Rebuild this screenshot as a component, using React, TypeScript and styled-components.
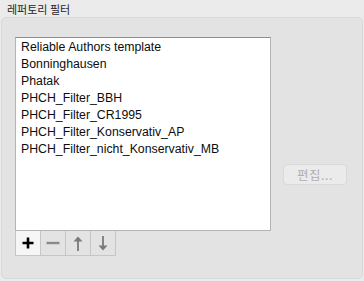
import React from "react";
import styled, { createGlobalStyle } from "styled-components";

const Global = createGlobalStyle`
  html, body { margin: 0; padding: 0; background: #ebebeb; }
  body { width: 364px; height: 281px; overflow: hidden; font-family: "Liberation Sans", Arial, "Noto Sans CJK KR", sans-serif; }
`;

const Page = styled.div`
  width: 364px;
  height: 281px;
  box-sizing: border-box;
  padding: 3px 1px 2px 1px;
  display: flex;
  flex-direction: column;
`;

const Title = styled.div`
  font-family: "Noto Sans CJK KR", "Liberation Sans", sans-serif;
  font-size: 11px;
  line-height: 13px;
  color: #262626;
  padding-left: 6px;
  height: 14px;
`;

const Group = styled.div`
  flex: 1;
  box-sizing: border-box;
  background: #e3e3e3;
  border: 1px solid #d8d8d8;
  border-radius: 5px;
  padding: 19px 14px 0 13px;
  display: flex;
  gap: 12px;
`;

const ListColumn = styled.div`
  display: flex;
  flex-direction: column;
`;

const List = styled.ul`
  list-style: none;
  margin: 0;
  width: 256px;
  height: 194px;
  box-sizing: border-box;
  background: #fff;
  border: 1px solid #b4b4b4;
  border-top-color: #8f8f8f;
  padding: 1px 0 0 5px;
`;

const Item = styled.li`
  font-family: "Liberation Sans", Arial, sans-serif;
  font-size: 12.3px;
  line-height: 17px;
  height: 17px;
  color: #0d0d0d;
  white-space: nowrap;
`;

const Tools = styled.div`
  display: flex;
`;

const ToolButton = styled.div<{ $active?: boolean }>`
  width: 26px;
  height: 25px;
  box-sizing: border-box;
  border: 1px solid #c6c6c6;
  border-top: none;
  margin-left: -1px;
  &:first-child { margin-left: 0; }
  background: ${(p) => (p.$active ? "#f6f6f6" : "#e3e3e3")};
  display: flex;
  align-items: center;
  justify-content: center;
`;

const Side = styled.div`
  padding-top: 127px;
`;

const EditButton = styled.div`
  width: 64px;
  height: 21px;
  box-sizing: border-box;
  border-radius: 4px;
  background: #ebebeb;
  border: 1px solid #d9d9d9;
  color: #b0b0b0;
  font-family: "Noto Sans CJK KR", "Liberation Sans", sans-serif;
  font-size: 12.5px;
  line-height: 19px;
  letter-spacing: 0.5px;
  text-align: center;
`;

const items = [
  "Reliable Authors template",
  "Bonninghausen",
  "Phatak",
  "PHCH_Filter_BBH",
  "PHCH_Filter_CR1995",
  "PHCH_Filter_Konservativ_AP",
  "PHCH_Filter_nicht_Konservativ_MB",
];

const Plus = () => (
  <svg width="12" height="12" viewBox="0 0 12 12">
    <path d="M6 0.5v11M0.5 6h11" stroke="#000" strokeWidth="2.6" />
  </svg>
);
const Minus = () => (
  <svg width="14" height="14" viewBox="0 0 14 14">
    <path d="M0.5 7h13" stroke="#8a8a8a" strokeWidth="2.4" />
  </svg>
);
const Up = () => (
  <svg width="10" height="15" viewBox="0 0 10 15">
    <path d="M5 3v12" stroke="#7a7a7a" strokeWidth="1.8" />
    <path d="M0.5 5.5L5 0.5L9.5 5.5Z" fill="#7a7a7a" />
  </svg>
);
const Down = () => (
  <svg width="10" height="15" viewBox="0 0 10 15">
    <path d="M5 0v12" stroke="#7a7a7a" strokeWidth="1.8" />
    <path d="M0.5 9.5L5 14.5L9.5 9.5Z" fill="#7a7a7a" />
  </svg>
);

export default function App() {
  return (
    <>
      <Global />
      <Page>
        <Title>레퍼토리 필터</Title>
        <Group>
          <ListColumn>
            <List>
              {items.map((t) => (
                <Item key={t}>{t}</Item>
              ))}
            </List>
            <Tools>
              <ToolButton $active><Plus /></ToolButton>
              <ToolButton><Minus /></ToolButton>
              <ToolButton><Up /></ToolButton>
              <ToolButton><Down /></ToolButton>
            </Tools>
          </ListColumn>
          <Side>
            <EditButton>편집...</EditButton>
          </Side>
        </Group>
      </Page>
    </>
  );
}
